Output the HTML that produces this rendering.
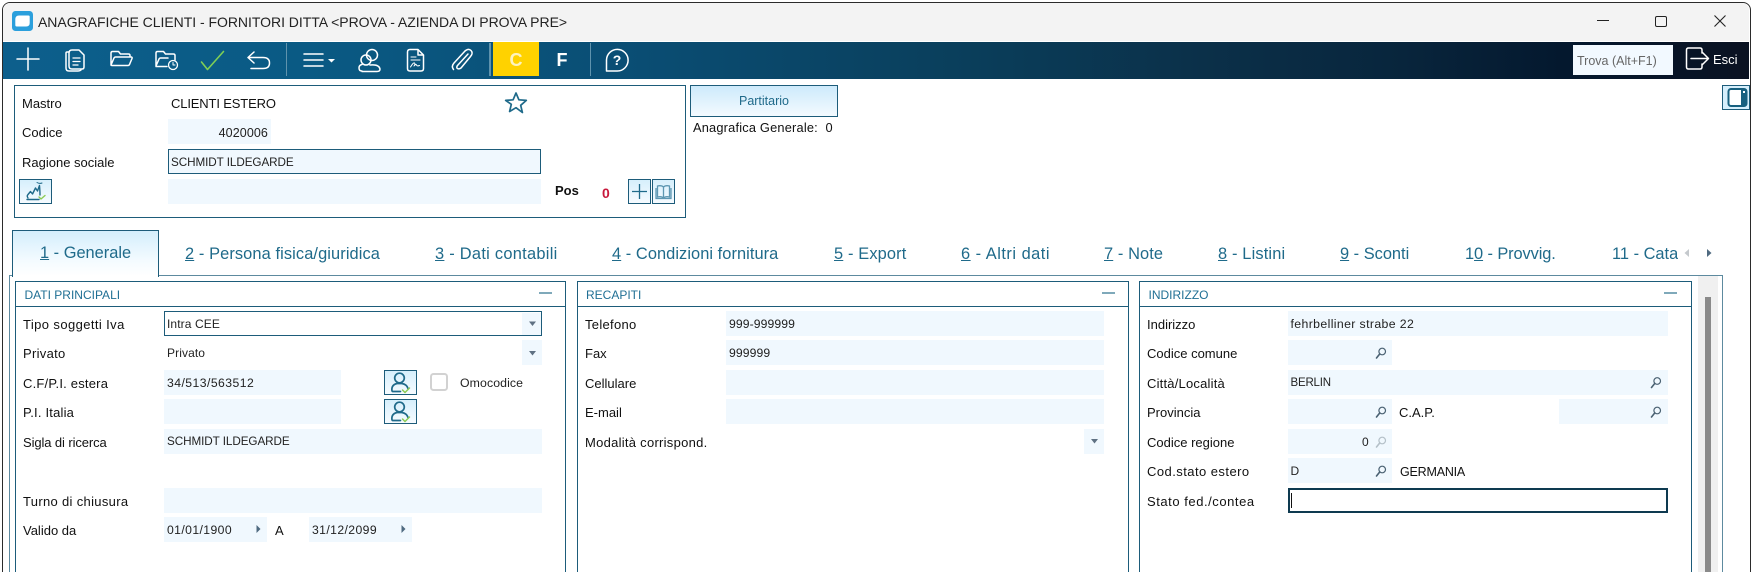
<!DOCTYPE html>
<html lang="it"><head><meta charset="utf-8"><title>Anagrafiche</title>
<style>
*{box-sizing:border-box}
html,body{margin:0;padding:0;background:#fff;width:1753px;height:572px;overflow:hidden;font-family:"Liberation Sans",sans-serif}
#root{position:relative;width:1753px;height:572px;overflow:hidden;background:#fff}
#win{position:absolute;left:2px;top:2px;width:1748.500px;height:580px;border:1.500px solid #2b2b2b;border-radius:8px 8px 0 0;background:#fff}
.a,.l,.v,.f,.tab,.pt{position:absolute}
.l{font-size:13px;line-height:16px;height:16px;color:#111;white-space:nowrap;margin-top:1px}
.v{font-size:12px;line-height:16px;height:16px;color:#222;white-space:nowrap;letter-spacing:.1px;margin-top:1px}
.f{background:#f0f8fe;height:25px}
.tab{font-size:16.400px;line-height:20px;height:20px;top:244px;color:#1f6a8a;white-space:nowrap}
.p{position:absolute;top:280.500px;height:300px;border:1.500px solid #1d5c7a;background:#fff}
.ph{position:absolute;left:0;right:0;top:0;height:25.500px;border-bottom:1.500px solid #1d5c7a}
.pt{font-size:12px;line-height:16px;top:5.500px;color:#1f6f94;white-space:nowrap}
.mn{position:absolute;top:10px;width:13px;height:2px;background:#7fa9ba}
.btn{position:absolute;border:1.500px solid #1d5c7a;background:linear-gradient(#d6effc,#f6fbff)}
svg{position:absolute;overflow:visible}
</style></head><body>
<div id="root">
<div id="win"></div>

<!-- title bar -->
<div class="a" style="left:3px;top:3px;width:1746px;height:38px;background:#f3f3f3;border-radius:7px 7px 0 0"></div>
<svg style="left:12px;top:11px" width="21" height="20" viewBox="0 0 21 20"><rect width="21" height="20" rx="3.500" fill="#2b9fdc"/><path d="M7 4.500h9.500q1.200 0 1.200 1.200v6.300q0 3.500-3.500 3.500H4.500q-1.200 0-1.200-1.200V8.500Q3.300 4.500 7 4.500z" fill="#fff"/></svg>
<div class="a" style="left:38px;top:14px;font-size:14px;line-height:16px;color:#222;white-space:nowrap;letter-spacing:-.03px">ANAGRAFICHE CLIENTI - FORNITORI DITTA &lt;PROVA - AZIENDA DI PROVA PRE&gt;</div>
<div class="a" style="left:1597px;top:20px;width:12px;height:1.200px;background:#222"></div>
<div class="a" style="left:1655px;top:16px;width:11.500px;height:10.500px;border:1.300px solid #222;border-radius:2px"></div>
<svg style="left:1714px;top:15px" width="12" height="12"><path d="M.5.500l11 11M11.500.500l-11 11" stroke="#222" stroke-width="1.100" fill="none"/></svg>

<!-- toolbar -->
<div class="a" style="left:3px;top:42px;width:1746px;height:37px;background:linear-gradient(90deg,#0d5f8c 0,#0a5a84 300px,#0a4d73 640px,#0a3f5c 950px,#0b3049 1200px,#08253c 1400px,#04182e 1560px,#0a1222 1746px)"></div>
<div class="a" style="left:493px;top:42px;width:46px;height:34px;background:#ffd200"></div>
<div class="a" style="left:493px;top:49px;width:46px;text-align:center;font-size:18px;line-height:22px;font-weight:bold;color:#fdf3c0">C</div>
<div class="a" style="left:539px;top:49px;width:46px;text-align:center;font-size:18px;line-height:22px;font-weight:bold;color:#fff">F</div>
<div class="a" style="left:286px;top:43px;width:1px;height:33px;background:#5f93ad"></div>
<div class="a" style="left:489px;top:43px;width:1.500px;height:33px;background:#5f93ad"></div>
<div class="a" style="left:590px;top:43px;width:1px;height:33px;background:#5f93ad"></div>
<svg style="left:0;top:0" width="700" height="82" fill="none" stroke="#fff" stroke-width="1.500" stroke-linecap="round" stroke-linejoin="round">
 <path d="M28 48v22M17 59h22" stroke-width="1.500"/>
 <path d="M69 52h-2a1 1 0 0 0-1 1v15q0 3 3 3h9q2 0 3-1"/>
 <path d="M69 53q0-3 3-3h7l5 5v12q0 2-2 2H72q-3 0-3-3z"/>
 <path d="M73 58h7M73 61.500h7M73 65h5" stroke-width="1.300"/>
 <path d="M111 65V53q0-1.500 1.500-1.500h6l2 2.500h8q1.500 0 1.500 1.500V57M111 65l3-7q.5-1 1.500-1H131q1.500 0 1 1.500l-2.500 6q-.5 1-1.500 1h-16q-1 0-1-.5z"/>
 <path d="M156 66V53q0-1.500 1.500-1.500h6l2 2.500h8q1.500 0 1.500 1.500V60M156 66l3-7q.5-1 1.500-1H168M156 66.500h11"/>
 <circle cx="173" cy="65" r="4.500" stroke-width="1.300"/><path d="M173 62.500V65h2" stroke-width="1"/>
 <path d="M201.500 62l6 7.500L223.500 51.500" stroke="#7fcf55" stroke-width="1.600"/>
 <path d="M254 52l-6 5.500 6 5.500M248 57.500h15q6.500 0 6.500 5.500t-6.500 5.500h-12"/>
 <path d="M304 54h19M304 60h19M304 66h19"/>
 <path d="M328 59h7l-3.500 3.500z" fill="#fff" stroke="none"/>
 <circle cx="372" cy="55" r="5.500"/><circle cx="366" cy="60" r="5"/>
 <path d="M362 71q-3 0-3-3 0-3 3-3.500M370 65q9-1 10 4 0 2.500-3 2.500H362"/>
 <path d="M410 49.500h8l5.500 5.500v13.500q0 2.500-2.500 2.500H410q-2.500 0-2.500-2.500V52q0-2.500 2.500-2.500zM418 49.500v5.500h5.500"/>
 <path d="M411 57h5M411 60h9" stroke-width="1.100"/>
 <path d="M410.500 67q3-5 4-4t-.5 3q2-2.500 2.500-1t3 .5" stroke-width="1"/>
 <path d="M468 54l-10.500 11.500q-1.500 2 0 3t3.500-.5l9.500-11.500q3-3.500.5-6t-6 .5L454 63q-3 3.500-.5 6.500"/>
 <path d="M606.500 71V60a10.800 10.800 0 1 1 10.800 11z"/>
</svg>
<div class="a" style="left:606px;top:52px;width:22px;text-align:center;font-size:14px;line-height:16px;font-weight:bold;color:#fff">?</div>
<div class="a" style="left:1573px;top:45px;width:100px;height:30px;background:#f2f9ff"></div>
<div class="a" style="left:1577px;top:53px;font-size:12.500px;line-height:16px;color:#666;white-space:nowrap">Trova (Alt+F1)</div>
<svg style="left:1685px;top:47px" width="26" height="24" fill="none" stroke="#fff" stroke-width="1.500" stroke-linejoin="round" stroke-linecap="round"><path d="M17 6V3q0-2-2-2H3.500q-2 0-2 2v17q0 2 2 2H15q2 0 2-2v-3"/><path d="M6 11.500h17M17.500 5.500l6 6-6 6"/></svg>
<div class="a" style="left:1713px;top:52px;font-size:13px;line-height:16px;color:#fff">Esci</div>

<!-- header box -->
<div class="a" style="left:14px;top:85px;width:672px;height:133px;border:1.500px solid #1d5c7a"></div>
<div class="l" style="left:22px;top:95px">Mastro</div>
<div class="l" style="left:171px;top:95px;letter-spacing:-.15px">CLIENTI ESTERO</div>
<svg style="left:504px;top:91px" width="24" height="24" viewBox="0 0 24 24"><path d="M12 2l2.900 6.800 7.400.6-5.600 4.900 1.700 7.200L12 16.700 5.600 20.500l1.700-7.200L1.700 9.400l7.400-.6z" fill="none" stroke="#1f6a8a" stroke-width="1.700" stroke-linejoin="round"/></svg>
<div class="l" style="left:22px;top:124px">Codice</div>
<div class="f" style="left:168px;top:119px;width:103px"></div>
<div class="v" style="left:168px;top:124px;width:100px;text-align:right;font-size:12.500px">4020006</div>
<div class="l" style="left:22px;top:154px">Ragione sociale</div>
<div class="f" style="left:168px;top:149px;width:373px;border:1.500px solid #1d5c7a"></div>
<div class="v" style="left:171px;top:154px;font-size:11.700px;letter-spacing:-.07px">SCHMIDT ILDEGARDE</div>
<div class="btn" style="left:19px;top:179px;width:33px;height:25px"></div>
<svg style="left:19px;top:179px" width="33" height="25" fill="none" stroke="#1f6a8a" stroke-width="1.400" stroke-linecap="round" stroke-linejoin="round"><path d="M9 19q-1.500-2 0-3.500l2.500-3 2 2.500 3-6 2 3 2-5.500q.5 6 .5 9.500"/><path d="M8 20.500h12"/><path d="M18 3.500q2.500 1.500 5 .5" stroke-width="1"/><path d="M20 18l2 2 4-3.500" stroke="#8ccb55"/></svg>
<div class="f" style="left:168px;top:179px;width:373px"></div>
<div class="a" style="left:555px;top:183px;font-size:13px;line-height:16px;font-weight:bold;color:#111">Pos</div>
<div class="a" style="left:602px;top:185px;font-size:14px;line-height:16px;font-weight:bold;color:#c8193c">0</div>
<div class="btn" style="left:628px;top:179px;width:23px;height:25px"></div>
<svg style="left:628px;top:179px" width="23" height="25"><path d="M11.500 5v15M4 12.500h15" stroke="#1f6a8a" stroke-width="1.300"/></svg>
<div class="btn" style="left:652px;top:179px;width:23px;height:25px"></div>
<svg style="left:652px;top:179px" width="23" height="25" fill="none" stroke="#5e97b2" stroke-width="1.300"><path d="M11.500 8q-2-2-6-1v11q4-1 6 1 2-2 6-1V7q-4-1-6 1zM11.500 8v11M4 9v10.500h15V9"/></svg>

<div class="a" style="left:690px;top:85px;width:148px;height:32px;border:1.500px solid #1d5c7a;background:linear-gradient(#cdeafb,#f3faff);color:#1f6a8a;font-size:12.500px;line-height:31px;text-align:center">Partitario</div>
<div class="l" style="left:693px;top:119px;font-size:12.800px;letter-spacing:.2px">Anagrafica Generale:&nbsp; 0</div>

<div class="a" style="left:1722px;top:85px;width:28px;height:25px;border:1.500px solid #1d5c7a;background:#d6effc"></div>
<svg style="left:1722px;top:85px" width="28" height="25"><rect x="6.500" y="4" width="18" height="17" rx="2.500" fill="#fff" stroke="#17607f" stroke-width="2"/><path d="M19 4h3.500q2 0 2 2v13q0 2-2 2H19z" fill="#17607f"/><rect x="21" y="6" width="2" height="2" fill="#fff"/></svg>

<!-- tab strip -->
<div class="a" style="left:9px;top:275px;width:1714px;height:300px;border:1.500px solid #5d8a9f;border-bottom:0"></div>
<div class="a" style="left:12px;top:230px;width:147px;height:47px;border:1.500px solid #1d5c7a;border-bottom:0;background:linear-gradient(#d4eefc 0,#f4fbff 30px,#fff 45px)"></div>
<div class="tab" style="left:40px;top:243px"><u>1</u> - Generale</div>
<div class="tab" style="left:185px;letter-spacing:.1px"><u>2</u> - Persona fisica/giuridica</div>
<div class="tab" style="left:435px;letter-spacing:.28px"><u>3</u> - Dati contabili</div>
<div class="tab" style="left:612px;letter-spacing:.06px"><u>4</u> - Condizioni fornitura</div>
<div class="tab" style="left:834px;letter-spacing:.14px"><u>5</u> - Export</div>
<div class="tab" style="left:961px;letter-spacing:.5px"><u>6</u> - Altri dati</div>
<div class="tab" style="left:1104px;letter-spacing:.1px"><u>7</u> - Note</div>
<div class="tab" style="left:1218px;letter-spacing:.15px"><u>8</u> - Listini</div>
<div class="tab" style="left:1340px"><u>9</u> - Sconti</div>
<div class="tab" style="left:1465px;letter-spacing:-.1px">1<u>0</u> - Provvig.</div>
<div class="tab" style="left:1612px;width:66px;overflow:hidden">11 - Catalogo</div>
<svg style="left:1683px;top:248px" width="32" height="10"><path d="M6 1v8L1.500 5z" fill="#c5c9cd"/><path d="M24 1v8L28.500 5z" fill="#4f6a80"/></svg>

<!-- scrollbar -->
<div class="a" style="left:1698px;top:276px;width:20px;height:296px;background:#f0f0f0"></div>
<div class="a" style="left:1705px;top:297px;width:6px;height:275px;background:#8a8a8a"></div>

<!-- panel 1 -->
<div class="p" style="left:15px;width:551px"><div class="ph"><div class="pt" style="left:8.500px">DATI PRINCIPALI</div><div class="mn" style="left:523px"></div></div></div>
<div class="l" style="left:23px;top:316px;letter-spacing:.4px">Tipo soggetti Iva</div>
<div class="f" style="left:164px;top:311px;width:378px;background:#fff;border:1.500px solid #1d5c7a"></div>
<div class="f" style="left:522px;top:312.500px;width:18.500px;height:22px"></div>
<div class="v" style="left:167px;top:315px">Intra CEE</div>
<div class="l" style="left:23px;top:345px;letter-spacing:.3px">Privato</div>
<div class="f" style="left:522px;top:340px;width:20px"></div>
<div class="v" style="left:167px;top:344px">Privato</div>
<div class="l" style="left:23px;top:375px;letter-spacing:.2px">C.F/P.I. estera</div>
<div class="f" style="left:164px;top:370px;width:177px"></div>
<div class="v" style="left:167px;top:374px;font-size:12.200px;letter-spacing:.45px">34/513/563512</div>
<div class="l" style="left:23px;top:404px;letter-spacing:.2px">P.I. Italia</div>
<div class="f" style="left:164px;top:399px;width:177px"></div>
<div class="l" style="left:23px;top:434px;letter-spacing:-.1px">Sigla di ricerca</div>
<div class="f" style="left:164px;top:429px;width:378px"></div>
<div class="v" style="left:167px;top:433px;font-size:11.700px;letter-spacing:-.07px">SCHMIDT ILDEGARDE</div>
<div class="l" style="left:23px;top:493px;letter-spacing:.32px">Turno di chiusura</div>
<div class="f" style="left:164px;top:488px;width:378px"></div>
<div class="l" style="left:23px;top:522px">Valido da</div>
<div class="f" style="left:164px;top:517px;width:103px"></div>
<div class="v" style="left:167px;top:521px;font-size:12.200px;letter-spacing:.4px">01/01/1900</div>
<div class="l" style="left:275px;top:522px">A</div>
<div class="f" style="left:309px;top:517px;width:103px"></div>
<div class="v" style="left:312px;top:521px;font-size:12.200px;letter-spacing:.4px">31/12/2099</div>
<svg style="left:0;top:0" width="560" height="560">
 <path d="M529 321.500h7l-3.500 4.500z M529 351h7l-3.500 4.500z" fill="#5f7183"/>
 <path d="M256.500 525v8l4-4z M401.500 525v8l4-4z" fill="#4f6a80"/>
</svg>
<div class="btn" style="left:384px;top:370px;width:33px;height:25px"></div>
<div class="btn" style="left:384px;top:399px;width:33px;height:25px"></div>
<svg style="left:384px;top:370px" width="33" height="54" fill="none" stroke="#1f6a8a" stroke-width="1.700" stroke-linecap="round">
 <g><circle cx="15.500" cy="8" r="4.800"/><path d="M8 21q-1-6 5-7.500h5q5 1 6 5M8.500 21.500h8"/><path d="M18.500 20l2.500 2.500 4.500-4.500" stroke="#8ccb55" stroke-width="1.500"/></g>
 <g transform="translate(0 29)"><circle cx="15.500" cy="8" r="4.800"/><path d="M8 21q-1-6 5-7.500h5q5 1 6 5M8.500 21.500h8"/><path d="M18.500 20l2.500 2.500 4.500-4.500" stroke="#8ccb55" stroke-width="1.500"/></g>
</svg>
<div class="a" style="left:430px;top:373px;width:18px;height:18px;border:2px solid #d2d2d2;border-radius:3.500px;background:#fff"></div>
<div class="v" style="left:460px;top:374px;font-size:12.300px">Omocodice</div>

<!-- panel 2 -->
<div class="p" style="left:577px;width:552px"><div class="ph"><div class="pt" style="left:8px">RECAPITI</div><div class="mn" style="left:524px"></div></div></div>
<div class="l" style="left:585px;top:316px;letter-spacing:.3px">Telefono</div>
<div class="f" style="left:726px;top:311px;width:378px"></div>
<div class="v" style="left:729px;top:315px;font-size:12.200px">999-999999</div>
<div class="l" style="left:585px;top:345px">Fax</div>
<div class="f" style="left:726px;top:340px;width:378px"></div>
<div class="v" style="left:729px;top:344px;font-size:12.200px">999999</div>
<div class="l" style="left:585px;top:375px">Cellulare</div>
<div class="f" style="left:726px;top:370px;width:378px"></div>
<div class="l" style="left:585px;top:404px">E-mail</div>
<div class="f" style="left:726px;top:399px;width:378px"></div>
<div class="l" style="left:585px;top:434px;letter-spacing:.27px">Modalità corrispond.</div>
<div class="f" style="left:1084px;top:429px;width:20px"></div>
<svg style="left:1090.500px;top:439px" width="7" height="5"><path d="M0 0h7L3.500 4.500z" fill="#5f7183"/></svg>

<!-- panel 3 -->
<div class="p" style="left:1139px;width:552.500px"><div class="ph"><div class="pt" style="left:8.500px">INDIRIZZO</div><div class="mn" style="left:524px"></div></div></div>
<div class="l" style="left:1147px;top:316px">Indirizzo</div>
<div class="f" style="left:1288px;top:311px;width:379.500px"></div>
<div class="v" style="left:1290.500px;top:315px;font-size:12.300px;letter-spacing:.37px">fehrbelliner strabe 22</div>
<div class="l" style="left:1147px;top:345px">Codice comune</div>
<div class="f" style="left:1288px;top:340px;width:103.500px"></div>
<div class="l" style="left:1147px;top:375px;letter-spacing:.2px">Città/Località</div>
<div class="f" style="left:1288px;top:370px;width:379.500px"></div>
<div class="v" style="left:1290.500px;top:374px;font-size:11.500px;letter-spacing:-.2px">BERLIN</div>
<div class="l" style="left:1147px;top:404px">Provincia</div>
<div class="f" style="left:1288px;top:399px;width:103.500px"></div>
<div class="l" style="left:1399px;top:404px">C.A.P.</div>
<div class="f" style="left:1559px;top:399px;width:108.500px"></div>
<div class="l" style="left:1147px;top:434px">Codice regione</div>
<div class="f" style="left:1288px;top:429px;width:103.500px"></div>
<div class="v" style="left:1362px;top:433px">0</div>
<div class="l" style="left:1147px;top:463px;letter-spacing:.45px">Cod.stato estero</div>
<div class="f" style="left:1288px;top:458px;width:103.500px"></div>
<div class="v" style="left:1290.500px;top:462px">D</div>
<div class="l" style="left:1400px;top:463px;font-size:12.500px;letter-spacing:-.2px">GERMANIA</div>
<div class="l" style="left:1147px;top:493px;letter-spacing:.55px">Stato fed./contea</div>
<div class="f" style="left:1288px;top:488px;width:379.500px;background:#fff;border:2px solid #0e3a50"></div>
<div class="a" style="left:1291px;top:493px;width:1.200px;height:15px;background:#111"></div>
<svg style="left:0;top:0" width="1753" height="572" fill="none" stroke="#4a6172" stroke-width="1.200" stroke-linecap="round">
 <g transform="translate(1381 353)"><circle cx="1.200" cy="-1.500" r="3.300"/><path d="M-1.300 1l-3.200 4" stroke-width="1.600"/></g>
 <g transform="translate(1656 382.500)"><circle cx="1.200" cy="-1.500" r="3.300"/><path d="M-1.300 1l-3.200 4" stroke-width="1.600"/></g>
 <g transform="translate(1381 412)"><circle cx="1.200" cy="-1.500" r="3.300"/><path d="M-1.300 1l-3.200 4" stroke-width="1.600"/></g>
 <g transform="translate(1656 412)"><circle cx="1.200" cy="-1.500" r="3.300"/><path d="M-1.300 1l-3.200 4" stroke-width="1.600"/></g>
 <g transform="translate(1381 442)" stroke="#b4c0c8"><circle cx="1.200" cy="-1.500" r="3.300"/><path d="M-1.300 1l-3.200 4" stroke-width="1.600"/></g>
 <g transform="translate(1381 471)"><circle cx="1.200" cy="-1.500" r="3.300"/><path d="M-1.300 1l-3.200 4" stroke-width="1.600"/></g>
</svg>
</div>
</body></html>
